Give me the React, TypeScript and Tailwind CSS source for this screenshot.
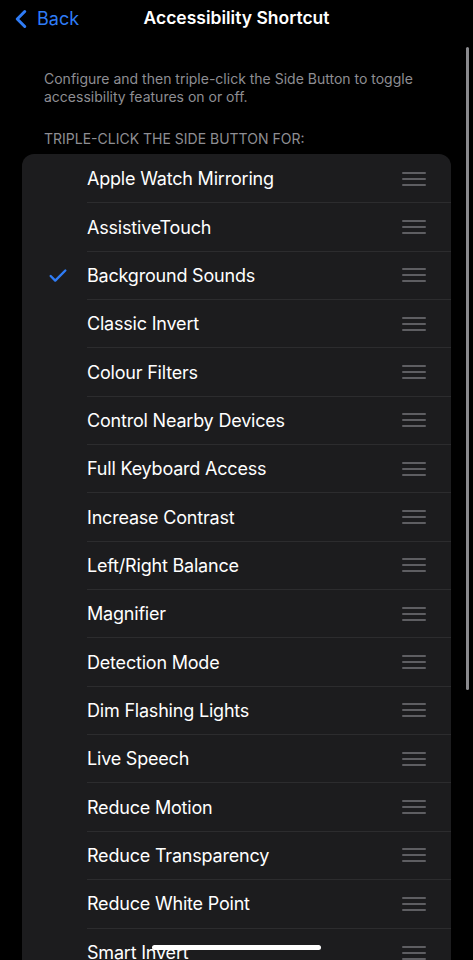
import { ChevronLeft, Check } from 'lucide-react';

const ITEMS = [
  'Apple Watch Mirroring',
  'AssistiveTouch',
  'Background Sounds',
  'Classic Invert',
  'Colour Filters',
  'Control Nearby Devices',
  'Full Keyboard Access',
  'Increase Contrast',
  'Left/Right Balance',
  'Magnifier',
  'Detection Mode',
  'Dim Flashing Lights',
  'Live Speech',
  'Reduce Motion',
  'Reduce Transparency',
  'Reduce White Point',
  'Smart Invert',
];

function Grip() {
  return (
    <div className="flex flex-col gap-[4px] w-[24px]">
      <span className="h-[2px] bg-[#5e5e62] rounded-full" />
      <span className="h-[2px] bg-[#5e5e62] rounded-full" />
      <span className="h-[2px] bg-[#5e5e62] rounded-full" />
    </div>
  );
}

export default function App() {
  return (
    <div
      className="relative h-[960px] w-full overflow-hidden bg-black text-white"
      style={{ fontFamily: 'Inter, "Noto Sans", sans-serif' }}
    >
      {/* Nav bar */}
      <header className="relative flex items-center h-[36px] pt-[1px]">
        <div className="flex items-center text-[#2f7cf6] pl-[6px]">
          <ChevronLeft size={30} strokeWidth={2.4} />
          <span className="text-[18px] ml-[1px]">Back</span>
        </div>
        <h1 className="absolute left-0 right-0 text-center text-[17.5px] font-semibold pointer-events-none">
          Accessibility Shortcut
        </h1>
      </header>

      {/* Description */}
      <p className="mt-[34px] px-[44px] text-[14px] leading-[18px] text-[#8e8e93]">
        Configure and then triple-click the Side Button to toggle accessibility features on or off.
      </p>

      <p className="mt-[24px] px-[44px] text-[14px] leading-[18px] text-[#8e8e93]">
        TRIPLE-CLICK THE SIDE BUTTON FOR:
      </p>

      {/* List */}
      <div className="mt-[6px] mx-[22px] rounded-[12px] bg-[#1c1c1e] overflow-hidden pt-[1px]">
        {ITEMS.map((label, i) => (
          <div key={label} className="flex items-center h-[48.35px]">
            <div className="w-[65px] flex justify-center pl-[7px]">
              {label === 'Background Sounds' && <Check size={22} strokeWidth={2.6} className="text-[#2f7cf6]" />}
            </div>
            <div
              className={`flex-1 h-full flex items-center pr-[25px] ${i < ITEMS.length - 1 ? 'border-b border-[#2c2c2e]' : ''}`}
            >
              <span className="flex-1 text-[18px] tracking-[-0.2px]">{label}</span>
              <Grip />
            </div>
          </div>
        ))}
      </div>

      {/* Scroll indicator */}
      <div className="absolute right-[4px] top-[47px] w-[3px] h-[643px] rounded-full bg-[#8a8a8e]" />

      {/* Home indicator */}
      <div className="absolute left-[152px] top-[945px] w-[169px] h-[5px] rounded-full bg-white" />
    </div>
  );
}
